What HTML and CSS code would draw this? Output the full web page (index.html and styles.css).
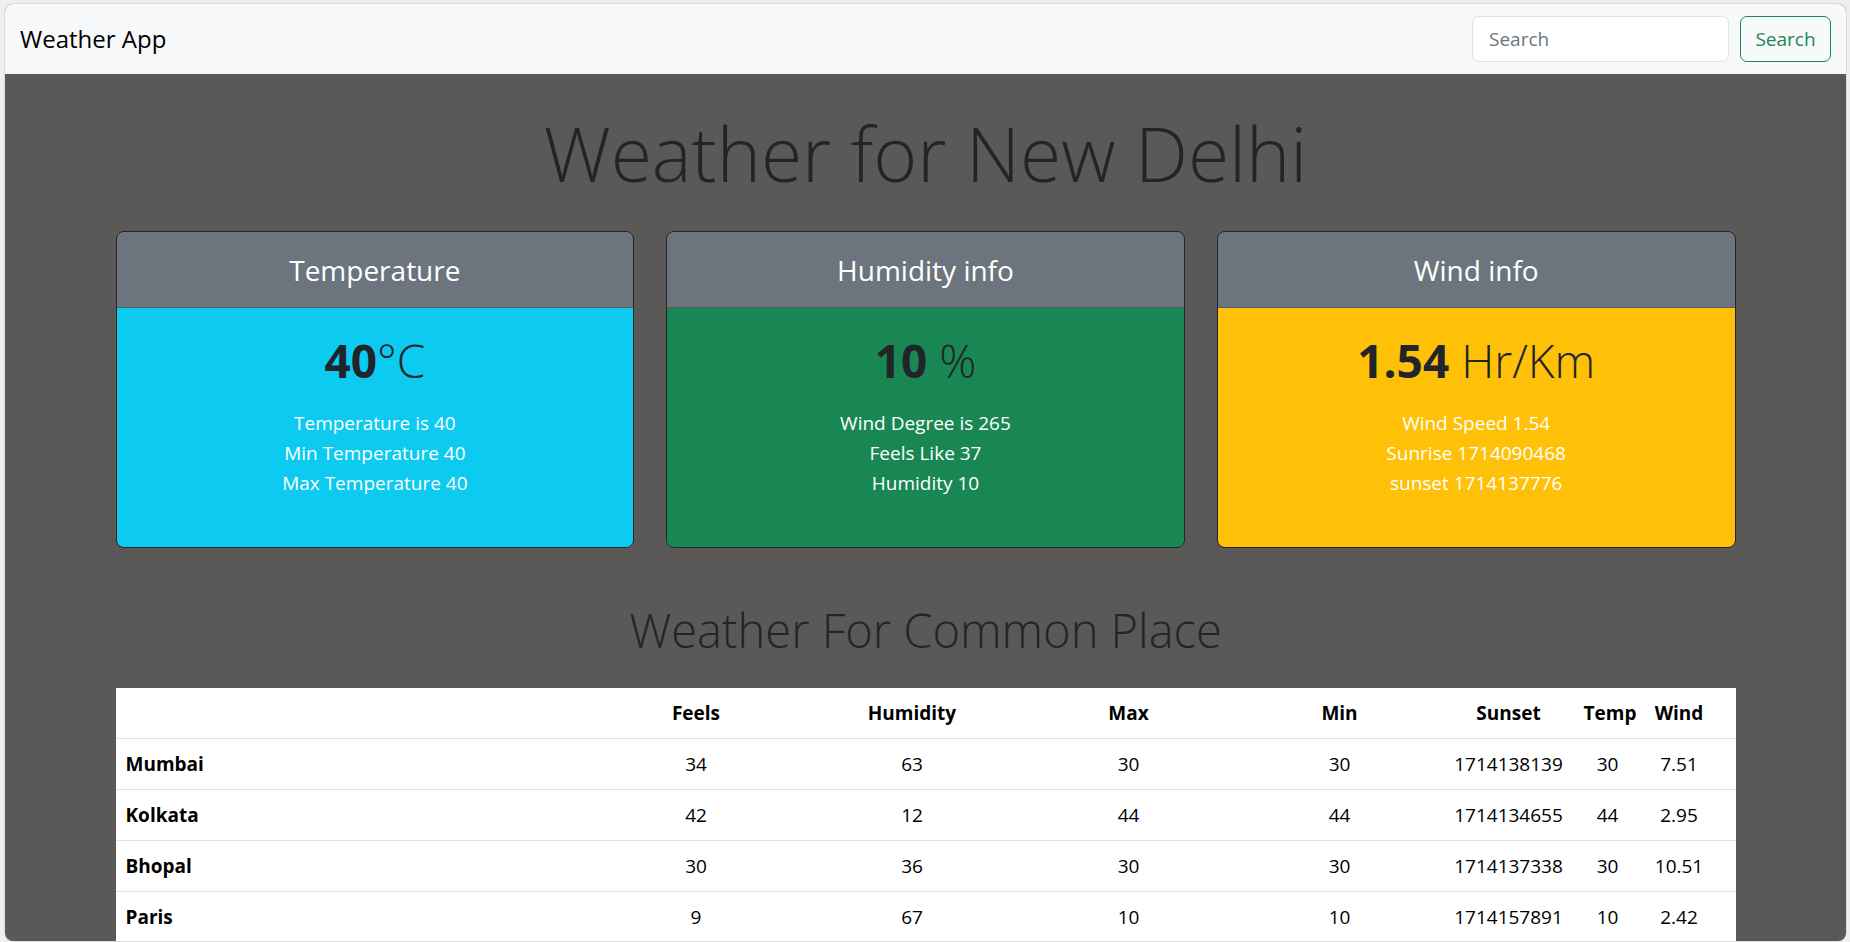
FILE: index.html
```html
<!DOCTYPE html>
<html lang="en">
<head>
<meta charset="utf-8">
<title>Weather App</title>
<link rel="stylesheet" href="styles.css">
</head>
<body>
<div class="window">
  <nav class="navbar">
    <span class="brand">Weather App</span>
    <form class="search">
      <input class="search-input" type="search" placeholder="Search">
      <button class="search-btn" type="button">Search</button>
    </form>
  </nav>
  <main class="main">
    <h1 class="title">Weather for New Delhi</h1>
    <div class="cards">
      <div class="card">
        <div class="card-header"><h3 class="card-title">Temperature</h3></div>
        <div class="card-body body-info">
          <h2 class="big"><span class="num">40</span><span class="unit">°C</span></h2>
          <ul class="facts">
            <li>Temperature is 40</li>
            <li>Min Temperature 40</li>
            <li>Max Temperature 40</li>
          </ul>
        </div>
      </div>
      <div class="card">
        <div class="card-header"><h3 class="card-title">Humidity info</h3></div>
        <div class="card-body body-success">
          <h2 class="big"><span class="num">10</span> <span class="unit">%</span></h2>
          <ul class="facts">
            <li>Wind Degree is 265</li>
            <li>Feels Like 37</li>
            <li>Humidity 10</li>
          </ul>
        </div>
      </div>
      <div class="card">
        <div class="card-header"><h3 class="card-title">Wind info</h3></div>
        <div class="card-body body-warning">
          <h2 class="big"><span class="num">1.54</span> <span class="unit">Hr/Km</span></h2>
          <ul class="facts">
            <li>Wind Speed 1.54</li>
            <li>Sunrise 1714090468</li>
            <li>sunset 1714137776</li>
          </ul>
        </div>
      </div>
    </div>
    <h2 class="subtitle">Weather For Common Place</h2>
    <table class="table">
      <colgroup>
        <col class="c-name"><col class="c-feels"><col class="c-hum"><col class="c-max"><col class="c-min"><col class="c-sunset"><col class="c-temp"><col class="c-wind">
      </colgroup>
      <thead>
        <tr><th></th><th>Feels</th><th>Humidity</th><th>Max</th><th>Min</th><th>Sunset</th><th>Temp</th><th class="last">Wind</th></tr>
      </thead>
      <tbody>
        <tr><th class="city">Mumbai</th><td>34</td><td>63</td><td>30</td><td>30</td><td>1714138139</td><td>30</td><td class="last">7.51</td></tr>
        <tr><th class="city">Kolkata</th><td>42</td><td>12</td><td>44</td><td>44</td><td>1714134655</td><td>44</td><td class="last">2.95</td></tr>
        <tr><th class="city">Bhopal</th><td>30</td><td>36</td><td>30</td><td>30</td><td>1714137338</td><td>30</td><td class="last">10.51</td></tr>
        <tr><th class="city">Paris</th><td>9</td><td>67</td><td>10</td><td>10</td><td>1714157891</td><td>10</td><td class="last">2.42</td></tr>
      </tbody>
    </table>
  </main>
</div>
</body>
</html>
```

FILE: styles.css
```css
html, body {
  margin: 0;
  padding: 0;
  overflow: hidden;
}
body {
  background: #efefef;
  font-family: "Open Sans", "Noto Sans", sans-serif;
  color: #212529;
  height: 942px;
}
.window {
  margin: 4px 4px 0 5px;
  height: 937px;
  border-radius: 8px;
  overflow: hidden;
  background: #5a5957;
  box-shadow: 0 0 0 1px #dcdcdc;
  display: flex;
  flex-direction: column;
}
.navbar {
  background: #f8f9fa;
  height: 70px;
  flex: none;
  display: flex;
  align-items: center;
  justify-content: space-between;
  padding: 0 15px;
  box-sizing: border-box;
}
.brand {
  font-size: 24px;
  color: #000;
  line-height: 1;
}
.search {
  display: flex;
  gap: 11px;
  margin: 0;
}
.search-input {
  width: 257px;
  height: 46px;
  box-sizing: border-box;
  border: 1px solid #dee2e6;
  border-radius: 7px;
  background: #fff;
  padding: 0 16px;
  font: inherit;
  font-size: 19px;
  color: #212529;
  outline: none;
}
.search-input::placeholder {
  color: #6c757d;
}
.search-btn {
  width: 91px;
  height: 46px;
  box-sizing: border-box;
  border: 1px solid #198754;
  border-radius: 7px;
  background: transparent;
  color: #198754;
  font: inherit;
  font-size: 19px;
  padding: 0;
}
.main {
  width: 1620px;
  margin: 0 auto;
  display: flex;
  flex-direction: column;
}
.title {
  margin: 34px 0 0;
  text-align: center;
  font-weight: 300;
  font-size: 75px;
  line-height: 90px;
  color: #212529;
}
.cards {
  margin-top: 33px;
  display: grid;
  grid-template-columns: repeat(3, 1fr);
  gap: 32px;
}
.card {
  border: 1px solid #212529;
  border-radius: 8px;
  overflow: hidden;
  display: flex;
  flex-direction: column;
  height: 317px;
  box-sizing: border-box;
}
.card-header {
  background: #6c757d;
  height: 76px;
  flex: none;
  display: flex;
  align-items: center;
  justify-content: center;
  border-bottom: 1px solid rgba(0,0,0,0.18);
  box-sizing: border-box;
}
.card-title {
  margin: 0;
  font-weight: 400;
  font-size: 28px;
  color: #fff;
}
.card-body {
  flex: 1;
  padding: 22px 20px 0;
  text-align: center;
}
.body-info { background: #0dcaf0; }
.body-success { background: #198754; }
.body-warning { background: #ffc107; }
.big {
  margin: 0;
  font-size: 46px;
  line-height: 60px;
  font-weight: 400;
  color: #212529;
}
.num { font-weight: 700; }
.unit { font-weight: 300; }
.facts {
  list-style: none;
  margin: 18px 0 0;
  padding: 0;
  color: #fff;
  font-size: 19px;
  line-height: 30px;
}
.subtitle {
  margin: 54px 0 0;
  text-align: center;
  font-weight: 300;
  font-size: 47px;
  line-height: 56px;
  color: #212529;
}
.table {
  margin-top: 30px;
  width: 1620px;
  border-collapse: collapse;
  table-layout: fixed;
  background: #fff;
  color: #000;
  font-size: 19px;
}
.c-name { width: 474px; }
.c-feels { width: 213px; }
.c-hum { width: 219px; }
.c-max { width: 214px; }
.c-min { width: 208px; }
.c-sunset { width: 130px; }
.c-temp { width: 68px; }
.c-wind { width: 94px; }
.table th, .table td {
  padding: 10px;
  line-height: 30px;
  text-align: center;
  border-bottom: 1px solid #dee2e6;
  white-space: nowrap;
}
.table th { font-weight: 700; }
.table td { font-weight: 400; }
.table .city { text-align: left; }
.table .last { padding-right: 29px; }
```
